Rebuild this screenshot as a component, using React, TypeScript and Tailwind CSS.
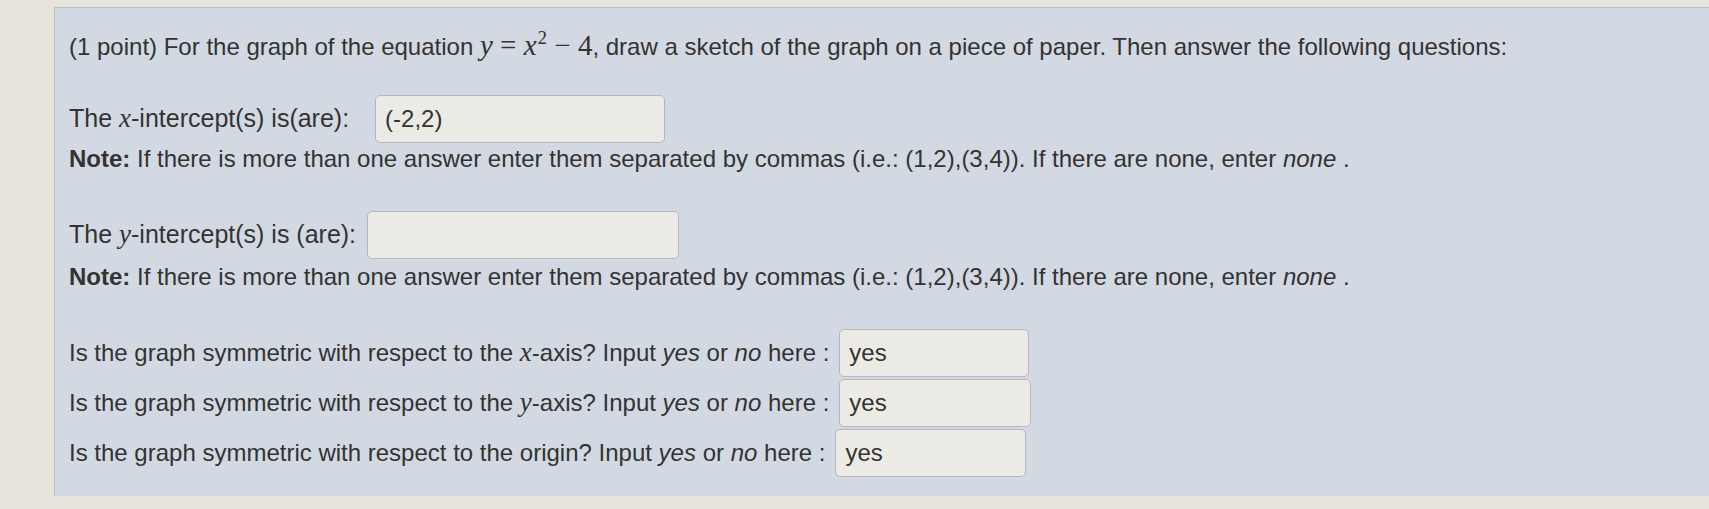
import React from 'react'

const sans = { fontFamily: '"Liberation Sans", Arial, sans-serif' }
const serif = { fontFamily: '"Liberation Serif", "DejaVu Serif", serif' }

function MathVar({ children }: { children: React.ReactNode }) {
  return (
    <span className="italic text-[27px] leading-none" style={serif}>
      {children}
    </span>
  )
}

function Box({ value, width }: { value?: string; width: string }) {
  return (
    <div
      className={`${width} h-[48px] shrink-0 rounded-[5px] border border-[#b3b8c0] bg-[#eceae4] px-[9px] flex items-center text-[24px] text-[#333]`}
    >
      {value}
    </div>
  )
}

function Note() {
  return (
    <p className="h-[28px] leading-[28px] whitespace-nowrap">
      <b>Note:</b> If there is more than one answer enter them separated by commas (i.e.: (1,2),(3,4)). If there are none, enter{' '}
      <i>none</i> .
    </p>
  )
}

export default function App() {
  return (
    <div className="w-[1709px] h-[509px] bg-[#e6e3da] overflow-hidden pt-[7px] pl-[54px]" style={sans}>
      <div className="h-[489px] bg-[#d2d9e2] border-t border-l border-[#bcc3cc] pl-[14px] pt-[22px] text-[24px] text-[#333]">
        {/* question header */}
        <p className="h-[30px] leading-[30px] whitespace-nowrap">
          (1 point) For the graph of the equation{' '}
          <span className="text-[29px]" style={serif}>
            <i>y</i> = <i>x</i>
            <span className="inline-block text-[19px] relative -top-[11px] ml-[1px]">2</span> − 4
          </span>
          , draw a sketch of the graph on a piece of paper. Then answer the following questions:
        </p>

        {/* x-intercepts */}
        <div className="mt-[35px] flex items-center gap-[26px]">
          <span className="whitespace-nowrap text-[25px]">
            The <MathVar>x</MathVar>-intercept(s) is(are):
          </span>
          <Box value="(-2,2)" width="w-[290px]" />
        </div>
        <div className="mt-[2px]">
          <Note />
        </div>

        {/* y-intercepts */}
        <div className="mt-[38px] flex items-center gap-[11px]">
          <span className="whitespace-nowrap text-[25px]">
            The <MathVar>y</MathVar>-intercept(s) is (are):
          </span>
          <Box width="w-[312px]" />
        </div>
        <div className="mt-[4px]">
          <Note />
        </div>

        {/* symmetry questions */}
        <div className="mt-[38px] flex flex-col gap-[2px]">
          <div className="flex items-center gap-[10px]">
            <span className="whitespace-nowrap">
              Is the graph symmetric with respect to the <MathVar>x</MathVar>-axis? Input <i>yes</i> or <i>no</i> here :
            </span>
            <Box value="yes" width="w-[190px]" />
          </div>
          <div className="flex items-center gap-[10px]">
            <span className="whitespace-nowrap">
              Is the graph symmetric with respect to the <MathVar>y</MathVar>-axis? Input <i>yes</i> or <i>no</i> here :
            </span>
            <Box value="yes" width="w-[192px]" />
          </div>
          <div className="flex items-center gap-[10px]">
            <span className="whitespace-nowrap">
              Is the graph symmetric with respect to the origin? Input <i>yes</i> or <i>no</i> here :
            </span>
            <Box value="yes" width="w-[191px]" />
          </div>
        </div>
      </div>
    </div>
  )
}
